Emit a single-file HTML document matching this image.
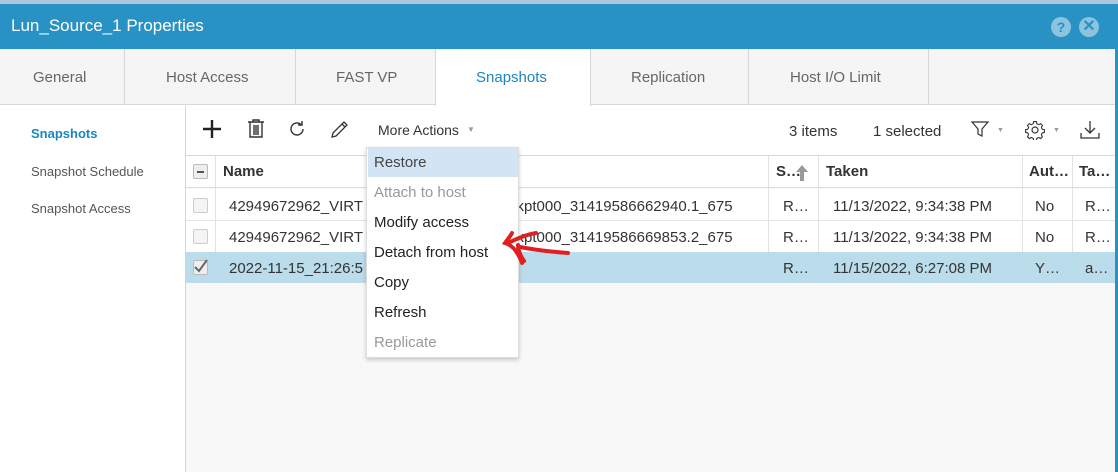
<!DOCTYPE html>
<html><head><style>
*{box-sizing:border-box;margin:0;padding:0}
body{width:1118px;height:472px;overflow:hidden;background:#fff;font-family:"Liberation Sans",sans-serif;position:relative;color:#333}
.a{position:absolute}
.t{position:absolute;white-space:nowrap}
</style></head><body>
<div class="a" style="left:0;top:0;width:1118px;height:5px;background:#a9c9da"></div>
<div class="a" style="left:0;top:4px;width:1116px;height:45px;background:#2892c4"></div>
<div class="t" style="left:11px;top:16px;font-size:17px;color:#fff">Lun_Source_1 Properties</div>
<div class="a" style="left:1051px;top:17px;width:20px;height:20px;border-radius:50%;background:#8cc3df;color:#2892c4;font-size:14px;font-weight:bold;text-align:center;line-height:20px">?</div>
<div class="a" style="left:1079px;top:17px;width:20px;height:20px;border-radius:50%;background:#8cc3df;color:#2892c4;font-size:16px;font-weight:bold;text-align:center;line-height:20px">✕</div>
<div class="a" style="left:1115px;top:4px;width:3px;height:468px;background:#2892c4"></div>
<div class="a" style="left:0;top:49px;width:1115px;height:56px;background:#f5f5f5;border-bottom:1px solid #d6d6d6"></div>
<div class="a" style="left:124px;top:49px;width:1px;height:56px;background:#d6d6d6"></div>
<div class="a" style="left:295px;top:49px;width:1px;height:56px;background:#d6d6d6"></div>
<div class="a" style="left:435px;top:49px;width:156px;height:57px;background:#fff;border-left:1px solid #d6d6d6;border-right:1px solid #d6d6d6"></div>
<div class="a" style="left:748px;top:49px;width:1px;height:56px;background:#d6d6d6"></div>
<div class="a" style="left:928px;top:49px;width:1px;height:56px;background:#d6d6d6"></div>
<div class="t" style="left:33px;top:69px;font-size:15px;color:#666">General</div>
<div class="t" style="left:166px;top:69px;font-size:15px;color:#666">Host Access</div>
<div class="t" style="left:336px;top:69px;font-size:15px;color:#666">FAST VP</div>
<div class="t" style="left:476px;top:69px;font-size:15px;color:#1a86c0">Snapshots</div>
<div class="t" style="left:631px;top:69px;font-size:15px;color:#666">Replication</div>
<div class="t" style="left:790px;top:69px;font-size:15px;color:#666">Host I/O Limit</div>
<div class="a" style="left:185px;top:106px;width:1px;height:366px;background:#d6d6d6"></div>
<div class="t" style="left:31px;top:126px;font-size:13px;color:#1a86c0;font-weight:bold">Snapshots</div>
<div class="t" style="left:31px;top:164px;font-size:13px;color:#555">Snapshot Schedule</div>
<div class="t" style="left:31px;top:201px;font-size:13px;color:#555">Snapshot Access</div>
<svg class="a" style="left:203px;top:120px" width="18" height="18" viewBox="0 0 18 18" stroke="#222" stroke-width="2.4"><path d="M9 0v18M0 9h18"/></svg>
<svg class="a" style="left:246px;top:119px" width="20" height="20" viewBox="0 0 20 20" fill="none" stroke="#333" stroke-width="1.4"><path d="M2 3h16M7 3V1h6v2M4 3v15h12V3M8 6v10M10 6v10M12 6v10"/></svg>
<svg class="a" style="left:288px;top:120px" width="18" height="18" viewBox="0 0 18 18" fill="none" stroke="#333" stroke-width="1.4"><path d="M15 9a6 6 0 1 1-2-4.5M14 1v4h-4"/></svg>
<svg class="a" style="left:330px;top:119px" width="20" height="20" viewBox="0 0 20 20" fill="none" stroke="#333" stroke-width="1.3"><path d="M2 18l1-4L14 3l3 3L6 17zM12 5l3 3"/></svg>
<div class="t" style="left:378px;top:122px;font-size:14px;color:#333">More Actions</div>
<div class="t" style="left:467px;top:125px;font-size:8px;color:#999">▼</div>
<div class="t" style="left:789px;top:123px;font-size:15px;color:#333">3 items</div>
<div class="t" style="left:873px;top:123px;font-size:15px;color:#333">1 selected</div>
<svg class="a" style="left:971px;top:120px" width="18" height="18" viewBox="0 0 18 18" fill="none" stroke="#333" stroke-width="1.2"><path d="M1 2h16l-6 7v7l-4-2V9z"/></svg>
<div class="t" style="left:997px;top:127px;font-size:7px;color:#999">▼</div>
<svg class="a" style="left:1025px;top:120px" width="20" height="20" viewBox="0 0 20 20" fill="none" stroke="#333" stroke-width="1.2"><circle cx="10" cy="10" r="3"/><path d="M8.5 1.5h3l.5 2.5 2 1 2.3-1.2 2 2-1.2 2.3 1 2 2.4.5v3l-2.4.5-1 2 1.2 2.3-2 2-2.3-1.2-2 1-.5 2.5h-3l-.5-2.5-2-1-2.3 1.2-2-2 1.2-2.3-1-2-2.4-.5v-3l2.4-.5 1-2-1.2-2.3 2-2 2.3 1.2 2-1z" transform="scale(.9) translate(1.1 .2)"/></svg>
<div class="t" style="left:1053px;top:127px;font-size:7px;color:#999">▼</div>
<svg class="a" style="left:1080px;top:120px" width="20" height="20" viewBox="0 0 20 20" fill="none" stroke="#333" stroke-width="1.3"><path d="M10 1v12M5 8l5 5 5-5M1 13v5h18v-5"/></svg>
<div class="a" style="left:186px;top:155px;width:929px;height:317px;background:#f8f8f8;border-top:1px solid #d6d6d6"></div>
<div class="a" style="left:186px;top:156px;width:929px;height:32px;background:#fff;border-bottom:1px solid #ddd"></div>
<div class="a" style="left:186px;top:189px;width:929px;height:32px;background:#fff;border-bottom:1px solid #e5e5e5"></div>
<div class="a" style="left:186px;top:221px;width:929px;height:31px;background:#fff"></div>
<div class="a" style="left:186px;top:252px;width:929px;height:31px;background:#bbdcea"></div>
<div class="a" style="left:215px;top:156px;width:1px;height:96px;background:#e2e2e2"></div>
<div class="a" style="left:768px;top:156px;width:1px;height:96px;background:#e2e2e2"></div>
<div class="a" style="left:818px;top:156px;width:1px;height:96px;background:#e2e2e2"></div>
<div class="a" style="left:1022px;top:156px;width:1px;height:96px;background:#e2e2e2"></div>
<div class="a" style="left:1072px;top:156px;width:1px;height:96px;background:#e2e2e2"></div>
<div class="a" style="left:193px;top:164px;width:15px;height:15px;border:1px solid #bbb;border-radius:2px;background:#eee"><div class="a" style="left:3px;top:6px;width:7px;height:2px;background:#555"></div></div>
<div class="a" style="left:193px;top:198px;width:15px;height:15px;border:1px solid #ccc;border-radius:2px;background:#f4f4f4"></div>
<div class="a" style="left:193px;top:229px;width:15px;height:15px;border:1px solid #ccc;border-radius:2px;background:#f4f4f4"></div>
<div class="a" style="left:193px;top:260px;width:15px;height:15px;border:1px solid #bbb;border-radius:2px;background:#eee"></div>
<svg class="a" style="left:193px;top:258px" width="16" height="16" viewBox="0 0 16 16" fill="none" stroke="#666" stroke-width="2"><path d="M2 9l4 4 8-11"/></svg>
<div class="t" style="left:223px;top:163px;font-size:15px;font-weight:bold;color:#333">Name</div>
<div class="t" style="left:776px;top:163px;font-size:15px;font-weight:bold;color:#333">S…</div>
<svg class="a" style="left:796px;top:165px" width="12" height="16" viewBox="0 0 12 16" fill="#999"><path d="M6 0l6 7H8v9H4V7H0z"/></svg>
<div class="t" style="left:826px;top:163px;font-size:15px;font-weight:bold;color:#333">Taken</div>
<div class="t" style="left:1029px;top:163px;font-size:15px;font-weight:bold;color:#333">Aut…</div>
<div class="t" style="left:1079px;top:163px;font-size:15px;font-weight:bold;color:#333">Ta…</div>
<div class="t" style="left:229px;top:198px;font-size:15px">42949672962_VIRT</div>
<div class="t" style="left:509px;top:198px;font-size:15px">ckpt000_31419586662940.1_675</div>
<div class="t" style="left:229px;top:229px;font-size:15px">42949672962_VIRT</div>
<div class="t" style="left:509px;top:229px;font-size:15px">ckpt000_31419586669853.2_675</div>
<div class="t" style="left:229px;top:260px;font-size:15px">2022-11-15_21:26:5</div>
<div class="t" style="left:783px;top:198px;font-size:15px">R…</div>
<div class="t" style="left:783px;top:229px;font-size:15px">R…</div>
<div class="t" style="left:783px;top:260px;font-size:15px">R…</div>
<div class="t" style="left:833px;top:198px;font-size:15px">11/13/2022, 9:34:38 PM</div>
<div class="t" style="left:833px;top:229px;font-size:15px">11/13/2022, 9:34:38 PM</div>
<div class="t" style="left:833px;top:260px;font-size:15px">11/15/2022, 6:27:08 PM</div>
<div class="t" style="left:1035px;top:198px;font-size:15px">No</div>
<div class="t" style="left:1035px;top:229px;font-size:15px">No</div>
<div class="t" style="left:1035px;top:260px;font-size:15px">Y…</div>
<div class="t" style="left:1085px;top:198px;font-size:15px">R…</div>
<div class="t" style="left:1085px;top:229px;font-size:15px">R…</div>
<div class="t" style="left:1085px;top:260px;font-size:15px">a…</div>
<div class="a" style="left:366px;top:147px;width:153px;height:211px;background:#fff;border:1px solid #ddd;box-shadow:0 2px 4px rgba(0,0,0,.2)"></div>
<div class="a" style="left:368px;top:148px;width:150px;height:29px;background:#d3e5f4"></div>
<div class="t" style="left:374px;top:154px;font-size:15px;color:#444">Restore</div>
<div class="t" style="left:374px;top:184px;font-size:15px;color:#999">Attach to host</div>
<div class="t" style="left:374px;top:214px;font-size:15px;color:#222">Modify access</div>
<div class="t" style="left:374px;top:244px;font-size:15px;color:#222">Detach from host</div>
<div class="t" style="left:374px;top:274px;font-size:15px;color:#222">Copy</div>
<div class="t" style="left:374px;top:304px;font-size:15px;color:#222">Refresh</div>
<div class="t" style="left:374px;top:334px;font-size:15px;color:#999">Replicate</div>
<svg class="a" style="left:500px;top:225px" width="75" height="45" viewBox="0 0 75 45" fill="none" stroke="#e02020" stroke-width="4" stroke-linecap="round"><path d="M8 18C20 12 30 9 36 8M12 8C10 12 7 15 5 18C12 20 18 27 22 38M18 20c0 5 3 12 6 16M20 22C35 25 55 27 68 28"/></svg>
</body></html>
